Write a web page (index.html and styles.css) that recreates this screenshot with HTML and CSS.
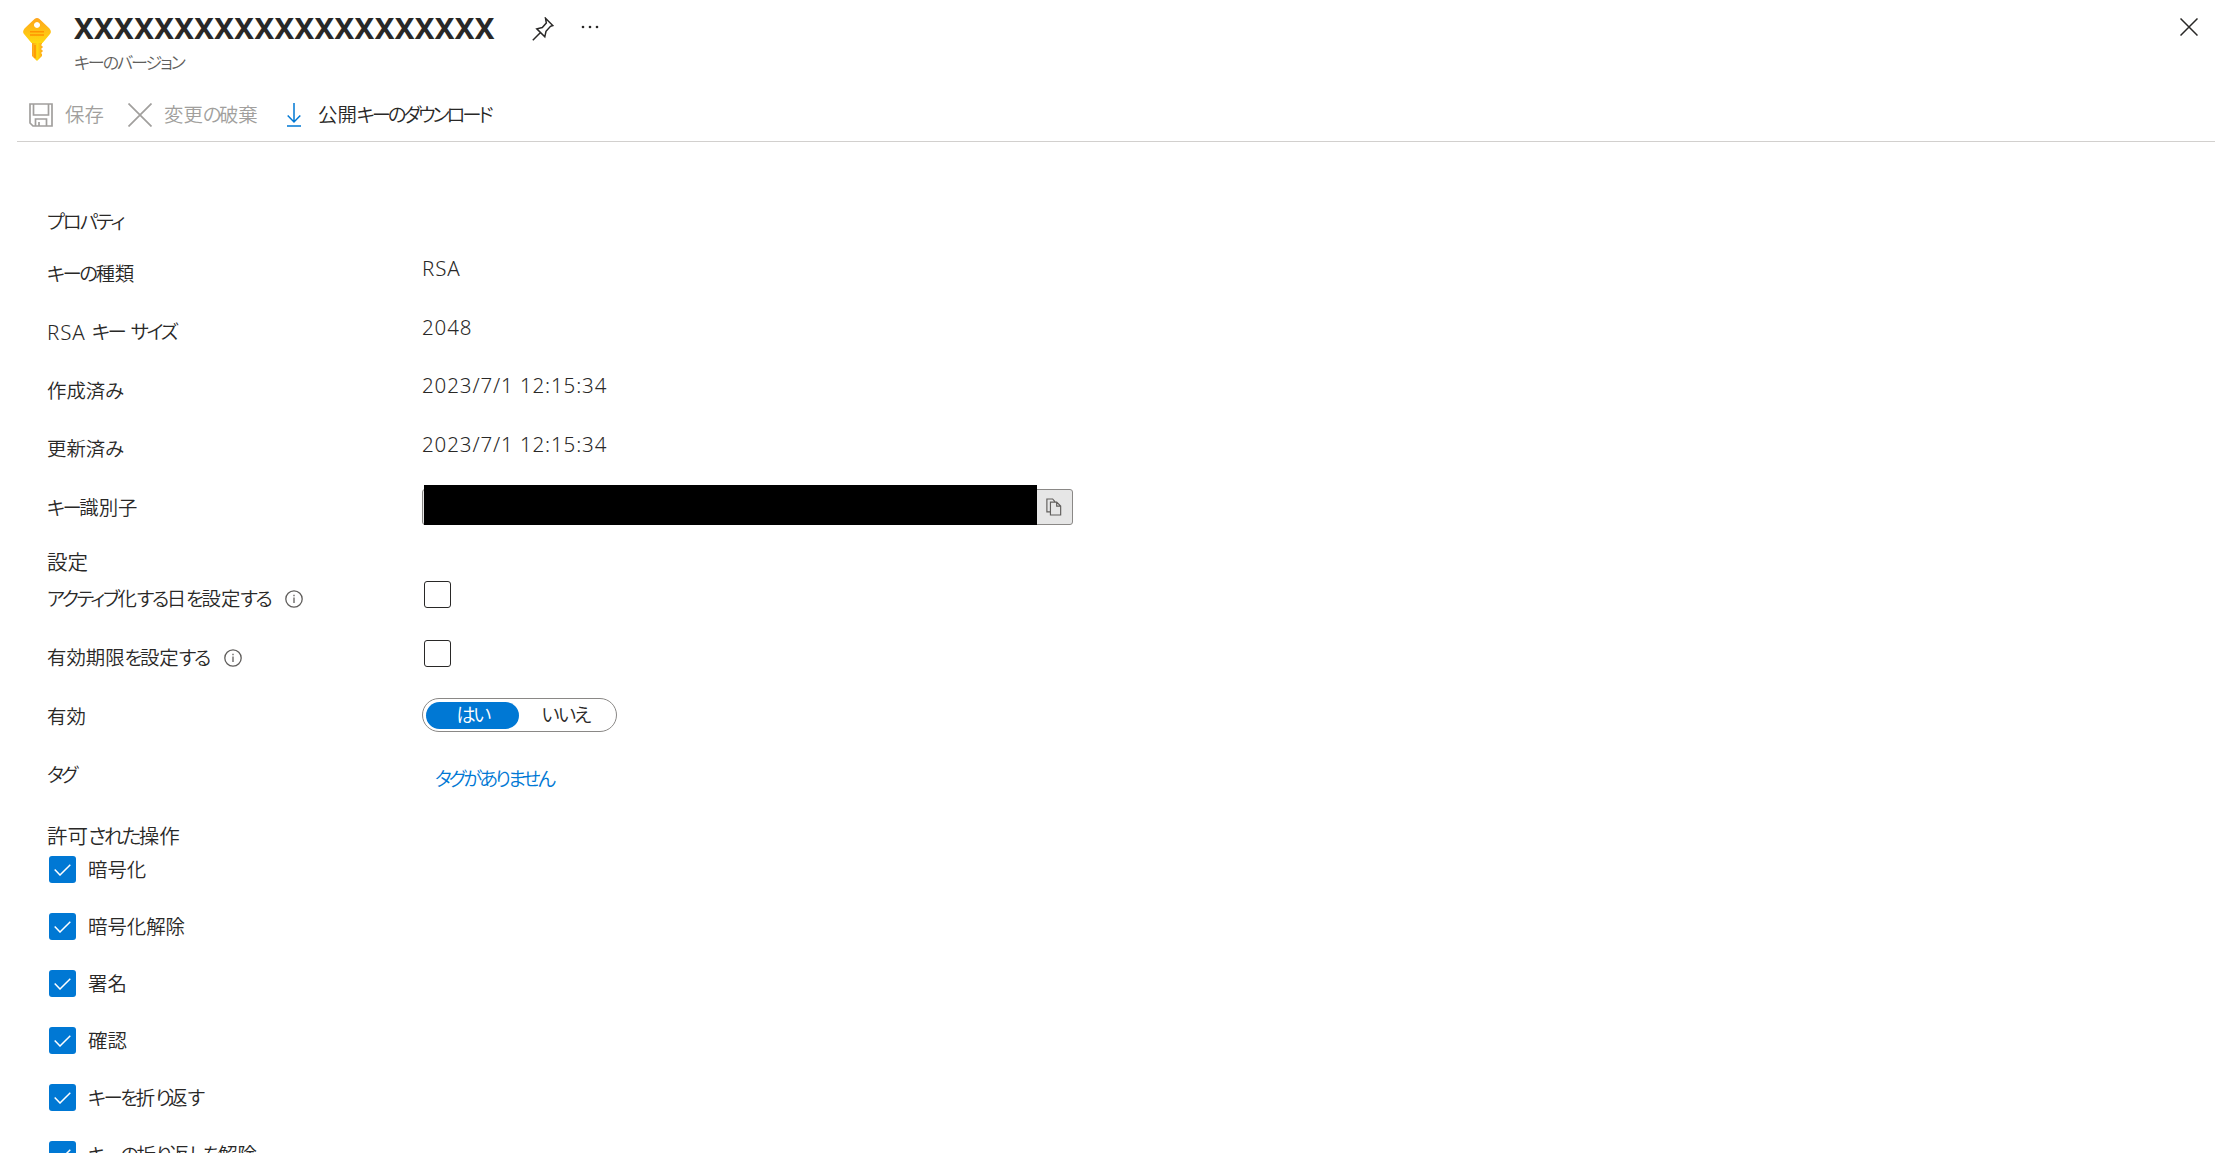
FILE: index.html
```
<!DOCTYPE html>
<html lang="ja">
<head>
  <meta charset="UTF-8">
  <meta name="viewport" content="width=device-width, initial-scale=1.0">
  <title>キーのバージョン</title>
  <link rel="stylesheet" href="styles.css">
</head>
<body>
  <header class="header">
    <svg class="key-icon" width="28" height="44" viewBox="0 0 28 44">
      <defs>
        <linearGradient id="shaft" x1="0" x2="1"><stop offset="0" stop-color="#fea11b"/><stop offset=".5" stop-color="#ffd70f"/><stop offset="1" stop-color="#fea11b"/></linearGradient>
        <linearGradient id="head" x1="0" y1="0" x2="0" y2="1"><stop offset="0" stop-color="#fea51c"/><stop offset="1" stop-color="#ffd90f"/></linearGradient>
      </defs>
      <path fill="url(#shaft)" d="M9 22v16l4.500 4.500q.5.500 1 0L19 38v-2l-1-1 2-2-2-2 2-2-2-2 1-1V22z"/>
      <path fill="url(#head)" fill-rule="evenodd" d="M11.500 1q2.500-2 5 0l10 9.500q2.500 3 .5 5.500L19.500 25h-11L1 16q-2-2.500.5-5.500zM14 4a3 3 0 1 0 .01 0z"/>
      <path stroke="#ff9300" stroke-width="1.500" d="M7 13.800h14M7 17h14"/>
      <path stroke="#ff9300" stroke-width="1.500" d="M12 27v13"/>
    </svg>
    <div class="heading">
      <h1>XXXXXXXXXXXXXXXXXXXXX</h1>
      <p>キーのバージョン</p>
    </div>
    <svg class="pin" width="22" height="24" viewBox="0 0 22 24" fill="none" stroke="#292827" stroke-width="1.500">
      <path d="M13.500 1.200l7.300 7.300-2.300.8-4.500 5-1.200 5.500-8-8 5.500-1.300 4-4.500zM8.500 15.500L.8 23.200"/>
    </svg>
    <svg class="more" width="18" height="4" viewBox="0 0 18 4" fill="#292827">
      <circle cx="2" cy="2" r="1.300"/><circle cx="9" cy="2" r="1.300"/><circle cx="16" cy="2" r="1.300"/>
    </svg>
    <svg class="close" width="18" height="18" viewBox="0 0 18 18" stroke="#292827" stroke-width="1.500"><path d="M.5.5l17 17M17.500.5l-17 17"/></svg>
  </header>

  <nav class="toolbar">
    <div class="tool disabled">
      <svg width="24" height="24" viewBox="0 0 24 24" fill="none" stroke="#a19f9d" stroke-width="1.700"><path d="M1 1h22v22H4l-3-3zM4.500 1v11h15V1M6.500 23v-7h11v7M10 23v-4"/></svg>
      <span class="t-save">保存</span>
    </div>
    <div class="tool disabled">
      <svg width="24" height="24" viewBox="0 0 24 24" stroke="#a19f9d" stroke-width="1.700"><path d="M.5.5l23 23M23.500.5l-23 23"/></svg>
      <span class="t-discard">変更<i class="kana">の</i>破棄</span>
    </div>
    <div class="tool">
      <svg width="14" height="24" viewBox="0 0 14 24" fill="none" stroke="#0078d4" stroke-width="1.500"><path d="M7 0v19M.7 12.500L7 19l6.300-6.500M0 23h14"/></svg>
      <span class="t-download">公開<i class="kana tight">キーのダウンロード</i></span>
    </div>
  </nav>

  <main>
    <h2 class="props-title"><i class="kana wide">プロパティ</i></h2>
    <div class="row"><label><i class="kana">キーの</i>種類</label><span class="value">RSA</span></div>
    <div class="row"><label><i class="latin">RSA </i><i class="kana">キー サイズ</i></label><span class="value">2048</span></div>
    <div class="row"><label>作成済<i class="kana">み</i></label><span class="value">2023/7/1 12:15:34</span></div>
    <div class="row"><label>更新済<i class="kana">み</i></label><span class="value">2023/7/1 12:15:34</span></div>
    <div class="row">
      <label><i class="kana">キー</i>識別子</label>
      <div class="copy-field">
        <div class="redacted"></div>
        <svg width="16" height="20" viewBox="0 0 18 20" fill="none" stroke="#605e5c" stroke-width="1.300"><path d="M5 15.500H1V1h6.500l2.500 3M5 4.500h7l4.500 4.500v10H5zM12 4.500V9h4.500"/></svg>
      </div>
    </div>

    <h2 class="settings-title">設定</h2>
    <div class="row">
      <label><i class="kana">アクティブ</i>化<i class="kana">する</i>日<i class="kana">を</i>設定<i class="kana">する</i><svg class="info" width="18" height="18" viewBox="0 0 18 18" fill="none" stroke="#605e5c" stroke-width="1.300"><circle cx="9" cy="9" r="8.200"/><path d="M9 7.500V13M9 4.700v1.500"/></svg></label>
      <span class="checkbox"></span>
    </div>
    <div class="row">
      <label>有効期限<i class="kana">を</i>設定<i class="kana">する</i><svg class="info" width="18" height="18" viewBox="0 0 18 18" fill="none" stroke="#605e5c" stroke-width="1.300"><circle cx="9" cy="9" r="8.200"/><path d="M9 7.500V13M9 4.700v1.500"/></svg></label>
      <span class="checkbox"></span>
    </div>
    <div class="row">
      <label>有効</label>
      <div class="toggle"><span class="on"><i class="kana">はい</i></span><span><i class="kana wide">いいえ</i></span></div>
    </div>
    <div class="row tags"><label><i class="kana tight">タグ</i></label><a class="link"><i class="kana tight">タグがありません</i></a></div>

    <h2 class="ops-title">許可<i class="kana">された</i>操作</h2>
    <ul class="ops">
      <li><span class="checkbox checked"><svg width="17" height="12" viewBox="0 0 17 12"><path d="M.7 5.500L6 11 16.300.7"/></svg></span>暗号化</li>
      <li><span class="checkbox checked"><svg width="17" height="12" viewBox="0 0 17 12"><path d="M.7 5.500L6 11 16.300.7"/></svg></span>暗号化解除</li>
      <li><span class="checkbox checked"><svg width="17" height="12" viewBox="0 0 17 12"><path d="M.7 5.500L6 11 16.300.7"/></svg></span>署名</li>
      <li><span class="checkbox checked"><svg width="17" height="12" viewBox="0 0 17 12"><path d="M.7 5.500L6 11 16.300.7"/></svg></span>確認</li>
      <li><span class="checkbox checked"><svg width="17" height="12" viewBox="0 0 17 12"><path d="M.7 5.500L6 11 16.300.7"/></svg></span><i class="kana">キーを</i>折<i class="kana tight">り</i>返<i class="kana">す</i></li>
      <li><span class="checkbox checked"><svg width="17" height="12" viewBox="0 0 17 12"><path d="M.7 5.500L6 11 16.300.7"/></svg></span><i class="kana">キーの</i>折<i class="kana">り</i>返<i class="kana">しを</i>解除</li>
    </ul>
  </main>
</body>
</html>
```
FILE: styles.css
```
* {
  box-sizing: border-box;
}
body {
  margin: 0;
  height: 1153px;
  overflow: hidden;
  background-color: #fff;
  color: #292827;
  font-family: "Noto Sans", "Noto Sans CJK JP", sans-serif;
  font-size: 19.4px;
  font-weight: 350;
  line-height: 28px;
}
h1, h2, p, ul {
  margin: 0;
  padding: 0;
}
svg {
  display: block;
  flex: none;
}
/* narrow UI-style kana */
.kana {
  font-style: normal;
  font-feature-settings: "palt";
  letter-spacing: -2.5px;
  word-spacing: 4px;
}
.kana.wide {
  letter-spacing: -2px;
}
.kana.tight {
  letter-spacing: -3.1px;
}
.latin, .value {
  font-size: 20.5px;
  font-style: normal;
  font-weight: 300;
  letter-spacing: 0.9px;
}
.header {
  display: flex;
  align-items: flex-start;
  height: 92px;
  padding: 18px 17px 0 23px;
}
.heading {
  width: 420px;
  margin-left: 23px;
}
h1 {
  font-size: 29.4px;
  font-weight: 700;
  line-height: 21px;
  letter-spacing: 0.35px;
  white-space: nowrap;
}
.heading p {
  margin-top: 11px;
  color: #605e5c;
  font-size: 17px;
  line-height: 26px;
  font-feature-settings: "palt";
  letter-spacing: -2px;
}
.pin {
  margin: -1px 0 0 38px;
}
.more {
  margin: 7px 0 0 27px;
}
.close {
  margin-left: auto;
}
.toolbar {
  display: flex;
  height: 50px;
  margin-left: 17px;
  padding: 8px 0 0 12px;
  border-bottom: 1px solid #d2d0ce;
}
.tool {
  display: flex;
  align-items: center;
  height: 30px;
  gap: 12px;
  white-space: nowrap;
}
.disabled {
  color: #a19f9d;
}
.t-save {
  width: 63px;
}
.t-discard {
  width: 123px;
}
.t-download {
  margin-left: 5px;
}
main {
  padding: 66px 0 0 47px;
}
h2 {
  font-size: 19.4px;
  font-weight: 350;
  line-height: 28px;
}
.props-title {
  margin-bottom: 19px;
}
.row {
  display: grid;
  grid-template-columns: 375px auto;
  align-items: start;
  justify-content: start;
  height: 58.6px;
}
.row label {
  display: flex;
  align-items: center;
  height: 37px;
  white-space: pre;
}
.value {
  line-height: 26px;
}
.info {
  margin-left: 15px;
}
.copy-field {
  display: flex;
  align-items: flex-end;
  width: 651px;
  height: 36px;
  border: 1px solid #8a8886;
  border-radius: 3px;
  background-color: #e6e6e6;
}
.redacted {
  width: 613px;
  height: 40px;
  margin: 0 9px -1px 1px;
  background-color: #000;
}
.copy-field svg {
  margin-bottom: 7px;
}
.settings-title, .ops-title {
  font-size: 20.5px;
}
.settings-title {
  margin-bottom: 5px;
}
.checkbox {
  width: 27px;
  height: 27px;
  margin-left: 2px;
  border: 1px solid #292827;
  border-radius: 3px;
}
.toggle {
  display: flex;
  align-items: center;
  width: 195px;
  height: 34px;
  padding: 0 3px;
  border: 1px solid #8a8886;
  border-radius: 17px;
}
.toggle span {
  width: 93px;
  height: 27px;
  border-radius: 14px;
  line-height: 26px;
  text-align: center;
}
.toggle .on {
  background-color: #0078d4;
  color: #fff;
}
.tags {
  height: 65.6px;
}
.link {
  margin: 8px 0 0 13px;
  color: #0078d4;
}
.ops-title {
  margin-bottom: 6px;
}
.ops {
  list-style: none;
}
.ops li {
  display: flex;
  align-items: center;
  height: 27px;
  margin-bottom: 30px;
  line-height: 26px;
  white-space: nowrap;
}
.checked {
  display: flex;
  align-items: center;
  justify-content: center;
  margin-right: 12px;
  border: 0;
  background-color: #0078d4;
}
.checked svg {
  fill: none;
  stroke: #fff;
  stroke-width: 1.5;
}
```
